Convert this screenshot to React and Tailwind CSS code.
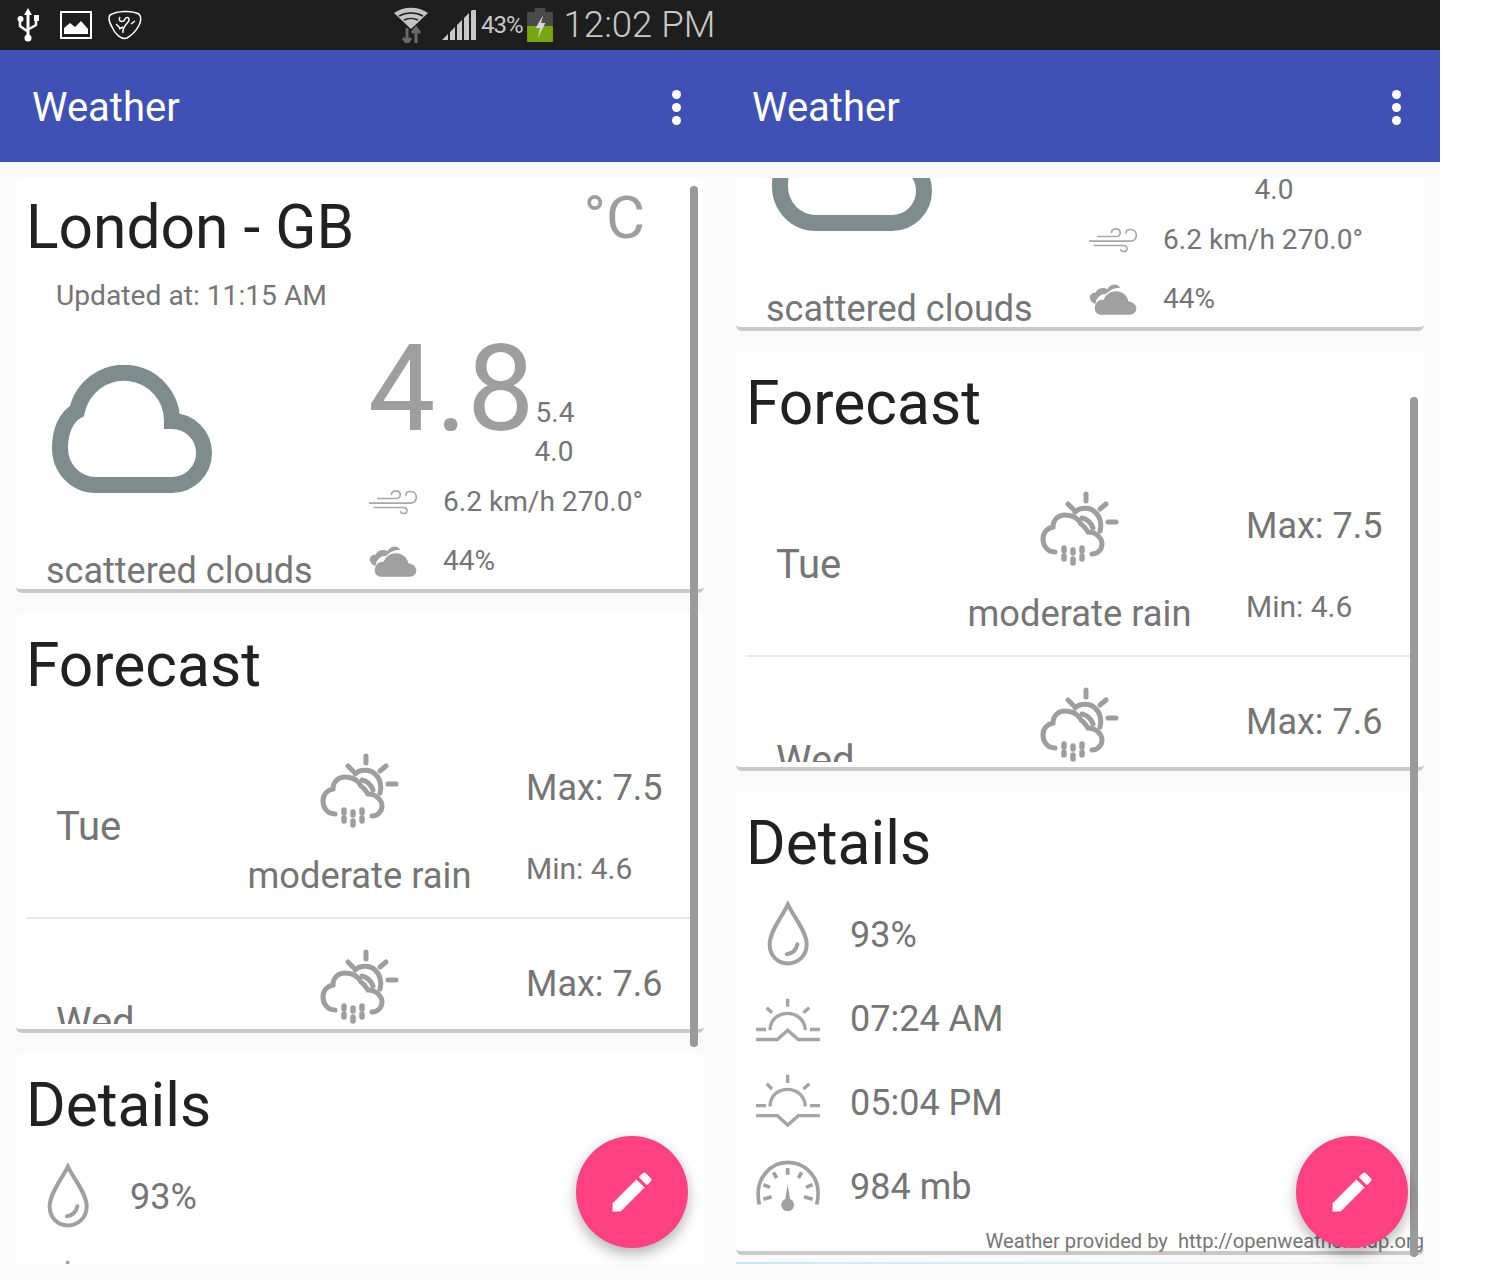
import React from "react";

const CloudBig = () => (
  <svg width="160" height="128" viewBox="0 0 160 128" fill="none" stroke="#7f8c8d" strokeWidth="16">
    <path d="M44 120H120A32 32 0 0 0 120 56A48 48 0 0 0 25 46C14 52 8 66 8 83C8 104 24 120 44 120Z" />
  </svg>
);

const Wind = () => (
  <svg width="50" height="27" viewBox="1045 475 150 80" fill="none" stroke="#a8a8a8" strokeWidth="5">
    <path d="M1072 503H1130C1146 503 1146 480 1128 480C1118 480 1114 488 1116 493" />
    <path d="M1048 517H1172C1196 517 1196 482 1172 482C1163 482 1158 488 1158 495" />
    <path d="M1062 530H1150C1166 530 1166 548 1152 548C1146 548 1143 545 1142 541" />
  </svg>
);

const Clouds = () => (
  <svg width="50" height="36" viewBox="1045 635 150 105">
    <path
      fill="#a0a0a0"
      d="M1052 690C1046 678 1056 668 1068 668C1074 652 1094 652 1104 658C1112 640 1134 640 1142 654C1120 654 1108 664 1100 672C1084 672 1070 682 1068 702C1062 702 1056 698 1052 690Z"
    />
    <path
      fill="#a0a0a0"
      d="M1088 735C1072 735 1062 724 1066 710C1068 696 1080 688 1092 690C1100 668 1124 658 1146 668C1158 674 1164 684 1166 694C1180 696 1192 706 1190 718C1188 730 1178 735 1166 735Z"
    />
  </svg>
);

const RainSun = () => (
  <svg width="80" height="80" viewBox="0 0 80 80" fill="none" stroke="#9e9e9e" strokeWidth="5" strokeLinecap="round">
    <path d="M46 3V10M28 13L33 18M66 13L60 18M68 31H76" />
    <path d="M35 21C40 16 50 16 55 21C60 25 62 33 60 40" />
    <path d="M42 27C47 28 51 32 53 37" />
    <path d="M15 61C7 61 3 54 3 48C3 41 8 37 13 36C13 28 19 24 25 24C32 24 38 27 41 33C44 35 46 38 48 41C56 41 62 47 62 53C62 58 58 63 52 63" />
    <path d="M24 57V60M24 65V68M33 59V62M33 68V72M42 57V60M42 65V68" strokeWidth="5.500" />
  </svg>
);

const Drop = () => (
  <svg className="-mt-[4px]" width="43" height="65" viewBox="80 30 130 195" fill="none" stroke="#a0a0a0" strokeWidth="12">
    <path d="M143 40C130 70 88 120 88 160C88 195 112 218 143 218C174 218 200 195 200 160C200 120 156 70 143 40Z" />
    <path d="M140 190C155 188 168 178 172 160" strokeLinecap="round" />
  </svg>
);

const Sunrise = () => (
  <svg width="64" height="47" viewBox="48 310 192 140" fill="none" stroke="#a4a4a4" strokeWidth="10">
    <path d="M143 318V342M80 345L96 360M208 345L190 360M48 410H78M210 410H240" />
    <path d="M90 412C92 345 192 345 196 412" />
    <path d="M48 440H112L143 412L175 440H240" />
  </svg>
);

const Sunset = () => (
  <svg className="-mt-[2px]" width="64" height="56" viewBox="48 553 192 168" fill="none" stroke="#a4a4a4" strokeWidth="10">
    <path d="M143 555V580M80 582L96 598M208 582L190 598M48 648H78M210 648H240" />
    <path d="M90 650C92 582 192 582 196 650" />
    <path d="M48 678H112L143 706L175 678H240" />
  </svg>
);

const Gauge = () => (
  <svg className="-mt-[4px]" width="64" height="52" viewBox="48 805 192 156" fill="none" stroke="#a0a0a0" strokeWidth="11">
    <path d="M58 942C40 860 95 815 143 815C195 815 250 860 230 942" />
    <path d="M143 832V852M100 845L110 862M185 845L175 862M70 882L90 890M218 882L198 890M70 926L95 918M218 926L192 918" />
    <path d="M143 880L150 925A19 19 0 1 1 136 925Z" fill="#a0a0a0" stroke="none" />
  </svg>
);

const Pencil = () => (
  <svg width="52" height="52" viewBox="0 0 24 24" fill="#fff">
    <path d="M3 17.25V21h3.75L17.81 9.94l-3.75-3.75L3 17.25zM20.71 7.04c.39-.39.39-1.02 0-1.41l-2.34-2.34c-.39-.39-1.02-.39-1.41 0l-1.83 1.83 3.75 3.75 1.83-1.83z" />
  </svg>
);

const StatusBar = () => (
  <div className="h-[50px] bg-[#1e1e1e] flex items-center pl-[17px] text-[#c8c8c8]">
    <svg width="22" height="34" viewBox="0 0 22 34" fill="#fff">
      <path d="M11 0L15 7H12.500V27L11 30L9.500 27V7H7Z" />
      <circle cx="11" cy="30" r="3.500" />
      <circle cx="3.500" cy="11" r="3" />
      <rect x="17" y="7" width="5" height="6" />
      <path d="M3 12V18L10 23M19 12V17L12 21" stroke="#fff" strokeWidth="2.500" fill="none" />
    </svg>
    <svg className="ml-[21px]" width="32" height="28" viewBox="0 0 32 28" fill="none">
      <rect x="1" y="1" width="30" height="26" stroke="#fff" strokeWidth="2" />
      <path d="M4 23V17L10 12L15 16L21 10L28 18V23Z" fill="#fff" />
    </svg>
    <svg className="ml-[15px]" width="36" height="30" viewBox="0 0 36 30" fill="none" stroke="#fff" strokeWidth="1.500">
      <path d="M3 5C10 1 24 0 32 4C37 10 30 22 20 28C14 30 8 24 5 17C2 12 1 8 3 5Z" />
      <path d="M13 7C10 12 17 13 18 9C20 6 24 8 21 12C18 16 15 18 16 23M24 14L28 11M9 14L13 18M12 19L16 17" />
    </svg>
    <svg className="ml-[250px]" width="36" height="36" viewBox="0 0 36 36">
      <path d="M1 6C11 -1 25 -1 35 6L18 22Z" fill="#c4c4c4" />
      <path d="M6 9C13 5 23 5 30 9M11 13C15 11 21 11 25 13" stroke="#1e1e1e" strokeWidth="1.500" fill="none" />
      <path d="M14 21V36M10 31L14 36L18 31" stroke="#6a6a6a" strokeWidth="3" fill="none" />
      <path d="M23 36V21M19 26L23 21L27 26" stroke="#6a6a6a" strokeWidth="3" fill="none" />
    </svg>
    <svg className="ml-[13px]" width="34" height="30" viewBox="0 0 34 30" fill="#c8c8c8">
      <path d="M0 30L6 24V30ZM8 22L13 17V30H8ZM15 15L20 10V30H15ZM22 8L27 3V30H22ZM29 1L34 -4V30H29Z" />
    </svg>
    <span className="ml-[5px] text-[24px] leading-none tracking-[-1px]">43%</span>
    <svg className="ml-[3px]" width="28" height="34" viewBox="0 0 26 34" preserveAspectRatio="none">
      <rect x="8" y="0" width="10" height="5" fill="#4a4a4a" />
      <rect x="1" y="4" width="24" height="14" fill="#4a4a4a" />
      <rect x="1" y="18" width="24" height="16" fill="#76a80e" />
      <path d="M16 7L9 20H13L11 30L18 15H14Z" fill="#d8d8d8" />
    </svg>
    <span className="ml-[10px] text-[36.600px] leading-none font-light">12:02 PM</span>
  </div>
);

const Header = () => (
  <div className="h-[112px] bg-[#3f51b5] flex items-center justify-between pt-[2px] pl-[32px] pr-[39px]">
    <span className="mt-[2px] text-[40px] leading-none text-white">Weather</span>
    <div className="flex flex-col gap-[4px]">
      <span className="w-[9px] h-[9px] rounded-full bg-white" />
      <span className="w-[9px] h-[9px] rounded-full bg-white" />
      <span className="w-[9px] h-[9px] rounded-full bg-white" />
    </div>
  </div>
);

const Card = ({ className, children }) => (
  <div className={"bg-white rounded-md border-b-4 border-[#c8c8c8] " + className}>{children}</div>
);

const CurrentCard = () => (
  <Card className="h-[415px] pt-[15px]">
    <div className="flex justify-between pl-[10px] pr-[59px]">
      <span className="text-[60.500px] leading-[70px] text-[#212121]">London - GB</span>
      <span className="text-[60px] leading-[50px] text-[#9e9e9e]">°C</span>
    </div>
    <div className="mt-[16px] pl-[40px] text-[28.200px] leading-[34px] text-[#757575]">Updated at: 11:15 AM</div>
    <div className="flex">
      <div className="w-[342px] shrink-0">
        <div className="mt-[52px] pl-[36px]">
          <CloudBig />
        </div>
        <div className="mt-[56px] pl-[30px] text-[36px] leading-[44px] text-[#757575]">scattered clouds</div>
      </div>
      <div className="pt-[15px]">
        <div className="flex h-[154px]">
          <span className="ml-[10px] mt-[1px] text-[120px] leading-[120px] text-[#9e9e9e]">4.8</span>
          <div className="pt-[65px] text-[28px] leading-[39px] text-[#757575]">
            <div className="ml-[1px]">5.4</div>
            <div>4.0</div>
          </div>
        </div>
        <div className="flex items-center h-[40px] pl-[10px] text-[28.100px] text-[#757575]">
          <span className="w-[75px]">
            <Wind />
          </span>
          6.2 km/h 270.0°
        </div>
        <div className="flex items-center h-[40px] mt-[19px] pl-[10px] text-[28px] text-[#757575]">
          <span className="w-[75px]">
            <Clouds />
          </span>
          44%
        </div>
      </div>
    </div>
  </Card>
);

const ForecastRow = ({ day, desc, max, min }) => (
  <div className="flex h-[196px] border-b-2 border-[#e8e8e8] text-[#757575]">
    <div className="w-[212px] shrink-0 pt-[82px] pl-[30px] text-[40px] leading-[44px]">{day}</div>
    <div className="w-[243px] shrink-0 pt-[30px] flex flex-col items-center">
      <RainSun />
      <div className="mt-[21px] text-[36.300px] leading-[44px] whitespace-nowrap">{desc}</div>
    </div>
    <div className="pt-[43px] pl-[45px]">
      <div className="text-[36px] leading-[44px] whitespace-nowrap">{max}</div>
      <div className="mt-[41px] text-[30px] leading-[36px] whitespace-nowrap">{min}</div>
    </div>
  </div>
);

const ForecastCard = () => (
  <Card className="h-[420px] mt-[20px] pt-[18px]">
    <div className="pl-[10px] text-[60.500px] leading-[70px] text-[#212121]">Forecast</div>
    <div className="mt-[22px] ml-[10px] mr-[14px] h-[301px] overflow-hidden">
      <ForecastRow day="Tue" desc="moderate rain" max="Max: 7.5" min="Min: 4.6" />
      <ForecastRow day="Wed" desc="moderate rain" max="Max: 7.6" min="Min: 4.7" />
    </div>
  </Card>
);

const DetailRow = ({ icon, text }) => (
  <div className="flex items-center h-[84px]">
    <div className="w-[64px] shrink-0 flex justify-center">{icon}</div>
    <span className="ml-[30px] text-[36px] text-[#757575]">{text}</span>
  </div>
);

const DetailsCard = () => (
  <Card className="h-[464px] mt-[20px] pt-[18px]">
    <div className="pl-[10px] text-[60.500px] leading-[70px] text-[#212121]">Details</div>
    <div className="mt-[14px] pl-[20px]">
      <DetailRow icon={<Drop />} text="93%" />
      <DetailRow icon={<Sunrise />} text="07:24 AM" />
      <DetailRow icon={<Sunset />} text="05:04 PM" />
      <DetailRow icon={<Gauge />} text="984 mb" />
    </div>
    <div className="text-right whitespace-pre text-[20.150px] leading-[24px] text-[#757575]">
      Weather provided by  http://openweathermap.org
    </div>
  </Card>
);

const Phone = ({ scrolled, barClass }) => (
  <div className="relative w-[720px] shrink-0 bg-[#fafafa]">
    <Header />
    <div className="h-[1118px] pt-[16px] px-[16px]">
      <div className="h-[1086px] overflow-hidden">
        <div className={scrolled ? "-mt-[262px]" : ""}>
          <CurrentCard />
          <ForecastCard />
          <DetailsCard />
          <div className="mt-[7px] h-[2px] bg-gradient-to-r from-[#c5e8f7] to-[#f5f5f5]" />
        </div>
      </div>
    </div>
    <div className={"absolute left-[690px] w-[8px] bg-[#9a9a9a] rounded-sm " + barClass} />
    <button className="absolute right-[32px] bottom-[32px] w-[112px] h-[112px] rounded-full bg-[#ff4081] flex items-center justify-center shadow-[0_6px_14px_rgba(0,0,0,0.3)]">
      <Pencil />
    </button>
  </div>
);

export default function App() {
  return (
    <div className="w-[1500px] h-[1280px] overflow-hidden bg-white font-['Roboto',sans-serif]">
      <div className="w-[1440px]">
        <StatusBar />
        <div className="flex">
          <Phone barClass="top-[136px] h-[861px]" />
          <Phone scrolled barClass="top-[347px] h-[860px]" />
        </div>
      </div>
    </div>
  );
}
